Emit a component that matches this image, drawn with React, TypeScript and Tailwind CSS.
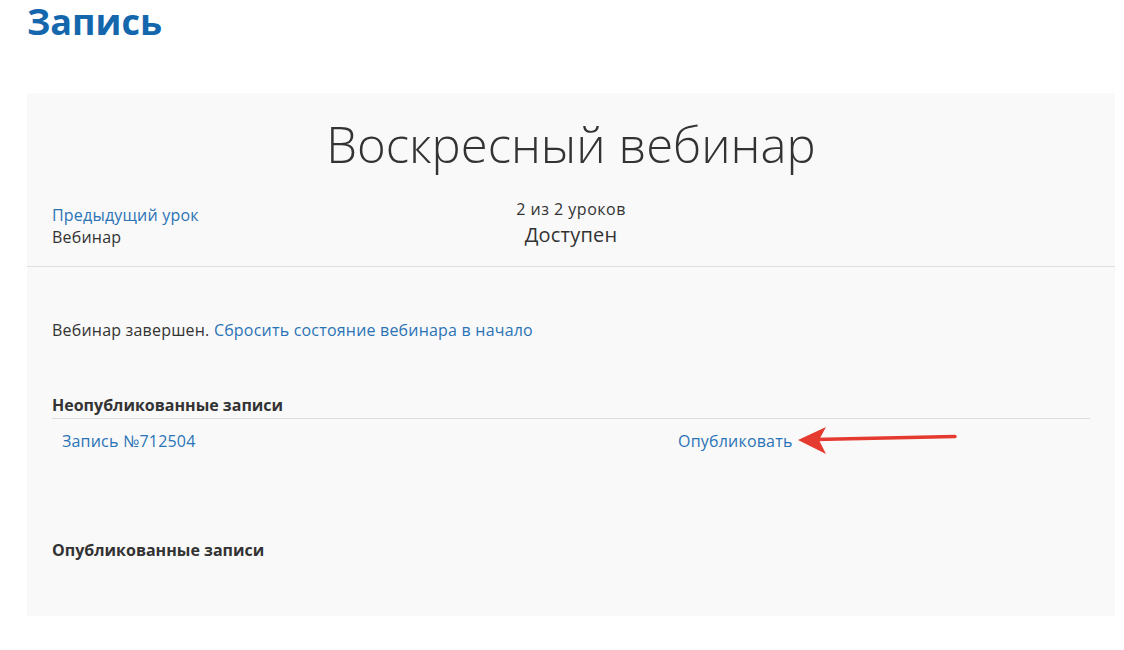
export default function App() {
  const font = { fontFamily: "'Open Sans', Lato, sans-serif" };
  return (
    <div className="min-h-[650px] bg-white text-[#333]" style={font}>
      <div className="px-[27px]">
        <h1 className="text-[36px] leading-[44px] font-bold text-[#1467ad]">Запись</h1>

        <div className="mt-[49px] w-[1088px] bg-[#f9f9f9] pb-[55px]">
          <div className="pt-[18px] text-center text-[49px] leading-[66px] font-light text-[#333]">
            Воскресный вебинар
          </div>

          <div className="relative mt-[16px] h-[73px] px-[25px] text-[16px] tracking-[0.2px]">
            <div className="pt-[11px] leading-[22px]">
              <a href="#" className="block text-[#2b73b7]">Предыдущий урок</a>
              <div className="text-[#333]">Вебинар</div>
            </div>
            <div className="absolute inset-x-0 top-[5px] text-center">
              <div className="leading-[22px] tracking-[0.5px]">2 из 2 уроков</div>
              <div className="text-[20px] leading-[30px]">Доступен</div>
            </div>
          </div>

          <div className="border-t border-[#dedede]" />

          <div className="px-[25px] text-[16px] tracking-[0.2px]">
            <div className="mt-[52px] leading-[22px]">
              Вебинар завершен.{" "}
              <a href="#" className="text-[#2b73b7]">Сбросить состояние вебинара в начало</a>
            </div>

            <div className="mt-[53px] w-[1038px]">
              <div className="leading-[22px] font-bold tracking-normal text-[#333] pb-[2px] border-b border-[#dddddd]">
                Неопубликованные записи
              </div>
              <div className="relative flex items-center h-[44px] leading-[22px]">
                <a href="#" className="ml-[10px] text-[#2b73b7]">Запись №712504</a>
                <a href="#" className="absolute left-[626px] text-[#2b73b7]">Опубликовать</a>
                <svg className="absolute left-[743px] top-[2px]" width="166" height="40" viewBox="0 0 166 40">
                  <line x1="20" y1="18.5" x2="160" y2="15.5" stroke="#e53a2f" strokeWidth="3.5" strokeLinecap="round" />
                  <path d="M3 19 L31 6 L24 19 L31 33 Z" fill="#e53a2f" />
                </svg>
              </div>
            </div>

            <div className="mt-[76px] leading-[22px] font-bold tracking-normal">Опубликованные записи</div>
          </div>
        </div>
      </div>
    </div>
  );
}
